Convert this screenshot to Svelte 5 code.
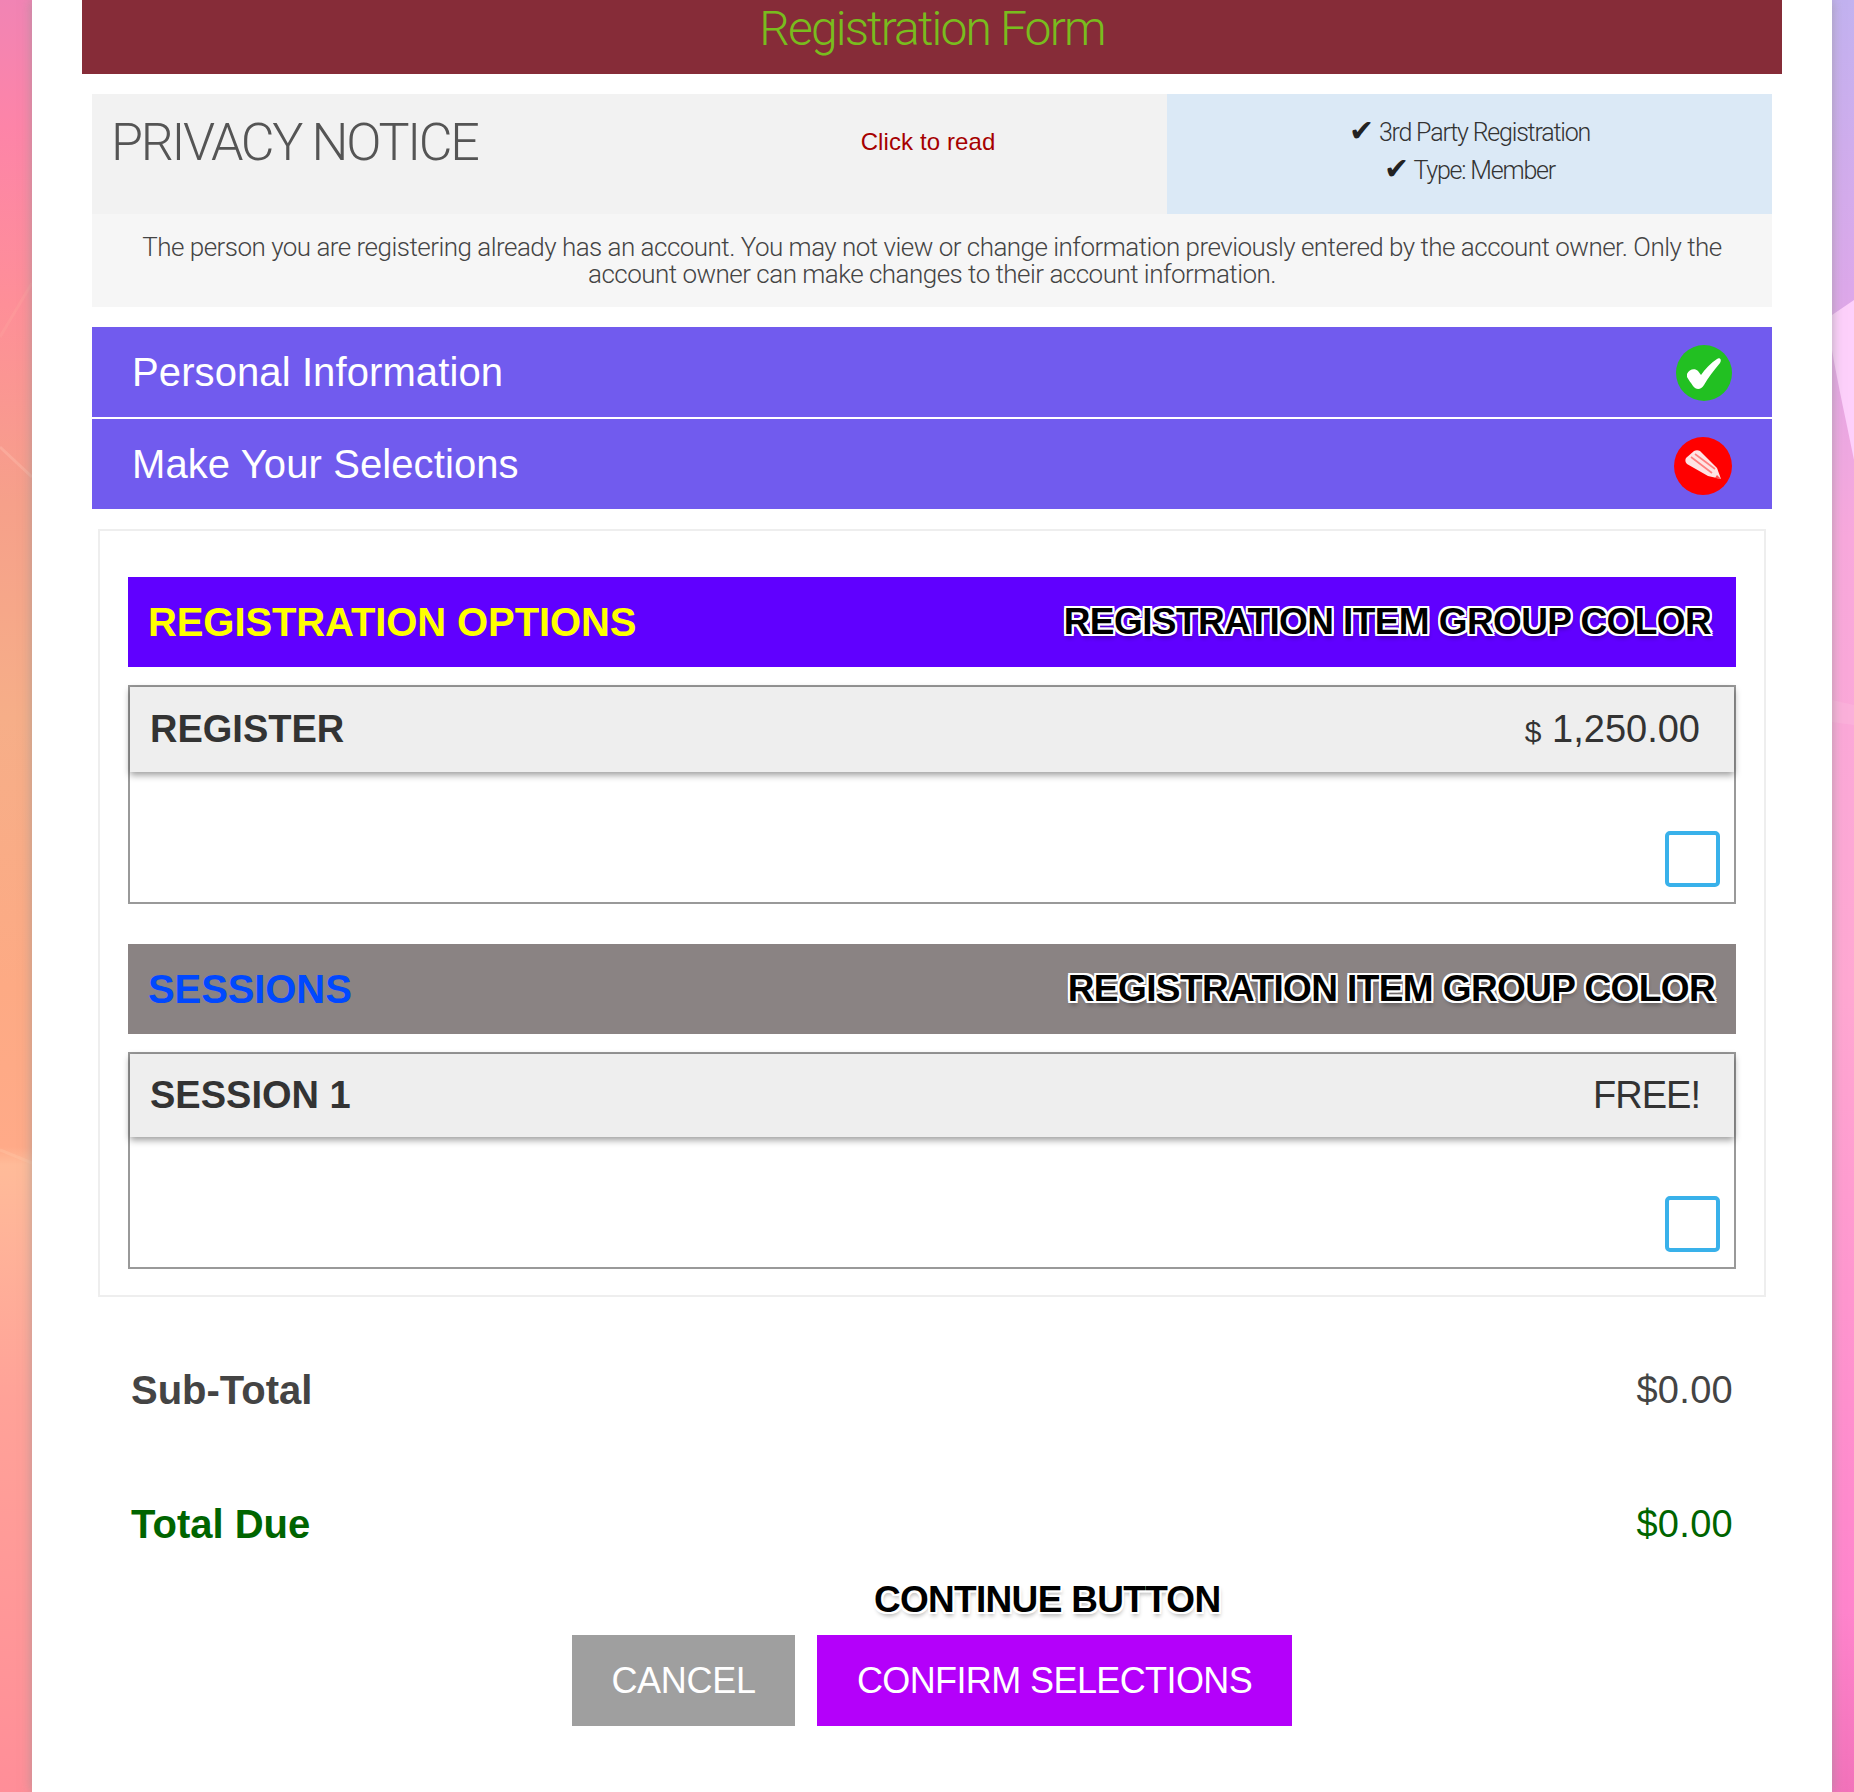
<script>
  const groups = [
    { title: 'REGISTRATION OPTIONS', cls: 'g1', item: 'REGISTER', free: false },
    { title: 'SESSIONS', cls: 'g2', item: 'SESSION 1', free: true }
  ];
</script>

<div class="page">
  <svg class="bg" width="1854" height="1792" viewBox="0 0 1854 1792" aria-hidden="true">
    <defs>
      <linearGradient id="lg" x1="0" y1="0" x2="0" y2="1">
        <stop offset="0" stop-color="#f184b4"/>
        <stop offset="0.07" stop-color="#fd84a8"/>
        <stop offset="0.17" stop-color="#fe8f98"/>
        <stop offset="0.28" stop-color="#f6a08a"/>
        <stop offset="0.4" stop-color="#f6ae88"/>
        <stop offset="0.55" stop-color="#fdaa84"/>
        <stop offset="0.64" stop-color="#ffaa88"/>
        <stop offset="0.65" stop-color="#ffbb99"/>
        <stop offset="0.78" stop-color="#ffa298"/>
        <stop offset="1" stop-color="#ff8e98"/>
      </linearGradient>
      <linearGradient id="rg" x1="0" y1="0" x2="0" y2="1">
        <stop offset="0" stop-color="#c2b2f0"/>
        <stop offset="0.16" stop-color="#dca8ea"/>
        <stop offset="0.3" stop-color="#f8a8dc"/>
        <stop offset="0.55" stop-color="#ffa8d2"/>
        <stop offset="0.9" stop-color="#ff84cc"/>
        <stop offset="1" stop-color="#f272ba"/>
      </linearGradient>
    </defs>
    <rect x="0" y="0" width="40" height="1792" fill="url(#lg)"/>
    <rect x="1820" y="0" width="34" height="1792" fill="url(#rg)"/>
    <path d="M0 337 L32 283" stroke="#ffb8a8" stroke-width="3" opacity="0.18" fill="none"/>
    <path d="M0 447 L32 477" stroke="#ffcab8" stroke-width="3" opacity="0.3" fill="none"/>
    <path d="M0 1150 L32 1163" stroke="#ffc8a8" stroke-width="3" opacity="0.35" fill="none"/>
    <path d="M1832 315 L1854 300 L1854 460 C1846 420 1838 385 1832 350 Z" fill="#fdd0fb"/>
    <path d="M1832 700 L1854 705 L1854 725 L1832 722 Z" fill="#ffd0e8" opacity="0.2"/>
  </svg>

  <main class="panel">
    <header class="top">Registration Form</header>

    <div class="content">
      <section class="privacy">
        <div class="notice-head">
          <h2>PRIVACY NOTICE</h2>
          <a class="read" href="#read">Click to read</a>
        </div>
        <div class="status">
          <div><span class="tick">✔</span> 3rd Party Registration</div>
          <div><span class="tick">✔</span> Type: Member</div>
        </div>
      </section>
      <p class="note">The person you are registering already has an account. You may not view or change information previously entered by the account owner. Only the account owner can make changes to their account information.</p>

      <div class="step first">
        <span>Personal Information</span>
        <svg class="badge ok" width="58" height="58" viewBox="0 0 58 58" aria-hidden="true">
          <circle cx="29" cy="29" r="28" fill="#22c022"/>
          <path d="M12 30 C14 25 20 24 23 27 L26 31 C30 25 36 19 42 15 C45 13 47 16 45 19 C39 26 33 34 29 41 C26 46 21 46 18 42 C16 39 13 35 12 33 Z" fill="#fff"/>
        </svg>
      </div>
      <div class="step">
        <span>Make Your Selections</span>
        <svg class="badge edit" width="58" height="58" viewBox="0 0 58 58" aria-hidden="true">
          <circle cx="29" cy="29" r="29" fill="#ff0000"/>
          <path d="M12 21 L20 14 C22 13 24 13 26 14 L43 31 L47 42 L34 39 L13 27 C11 25 11 23 12 21 Z" fill="#ffe4e4"/>
          <path d="M17 20 L38 36 M21 17 L41 32" stroke="#ff7f7f" stroke-width="1.6" fill="none"/>
          <path d="M43 38 L47 42 L41 41 Z" fill="#ff5050"/>
        </svg>
      </div>

      <section class="box">
        {#each groups as g}
          <div class="group {g.cls}">
            <h3>{g.title}</h3>
            <span class="outlined">REGISTRATION ITEM GROUP COLOR</span>
          </div>
          <div class="item {g.cls}">
            <div class="item-head">
              <strong>{g.item}</strong>
              {#if g.free}
                <span class="price free">FREE!</span>
              {:else}
                <span class="price"><small>$</small> 1,250.00</span>
              {/if}
            </div>
            <div class="item-body"><span class="check"></span></div>
          </div>
        {/each}
      </section>

      <div class="sum sub"><b>Sub-Total</b><span>$0.00</span></div>
      <div class="sum due"><b>Total Due</b><span>$0.00</span></div>

      <div class="actions">
        <div class="outlined cont">CONTINUE BUTTON</div>
        <div class="btns">
          <button class="cancel">CANCEL</button>
          <button class="confirm">CONFIRM SELECTIONS</button>
        </div>
      </div>
    </div>
  </main>
</div>

<style>
  :global(body) { margin: 0; }
  .page {
    position: relative;
    width: 1854px;
    height: 1792px;
    overflow: hidden;
    font-family: "Liberation Sans", Arial, sans-serif;
    background: #fff;
  }
  .bg { position: absolute; left: 0; top: 0; }
  .panel {
    position: relative;
    width: 1800px;
    height: 1792px;
    margin-left: 32px;
    background: #fff;
    box-shadow: 0 0 11px rgba(150, 150, 150, 0.7);
  }
  .top {
    margin: 0 50px;
    height: 74px;
    background: #862c38;
    color: #79bc1e;
    font-family: Roboto, "Liberation Sans", sans-serif;
    font-weight: 300;
    font-size: 48px;
    line-height: 58px;
    text-align: center;
    letter-spacing: -1.85px;
  }
  .content { margin: 0 60px; padding-top: 20px; }
  .privacy { display: flex; height: 120px; background: #f2f2f2; }
  .notice-head { flex: 0 0 1075px; display: flex; align-items: flex-start; }
  .notice-head h2 {
    flex: 0 0 672px;
    box-sizing: border-box;
    margin: 0;
    padding: 19px 0 0 19px;
    font-family: Roboto, "Liberation Sans", sans-serif;
    font-weight: 300;
    font-size: 52px;
    line-height: 60px;
    letter-spacing: -2.3px;
    color: #555;
  }
  .read {
    flex: 0 0 328px;
    margin-top: 33px;
    text-align: center;
    font-size: 24px;
    line-height: 30px;
    letter-spacing: 0.1px;
    color: #a60000;
    text-decoration: none;
  }
  .status {
    flex: 1;
    background: #dbe9f6;
    padding-top: 20px;
    text-align: center;
    font-family: Roboto, "Liberation Sans", sans-serif;
    font-weight: 300;
    font-size: 25px;
    line-height: 38px;
    letter-spacing: -1.2px;
    color: #333;
  }
  .tick { font-family: "DejaVu Sans", sans-serif; font-size: 30px; line-height: 30px; letter-spacing: 0; color: #222; }
  .note {
    margin: 0;
    box-sizing: border-box;
    height: 93px;
    padding: 20px 40px 0;
    background: #f6f6f6;
    text-align: center;
    font-family: Roboto, "Liberation Sans", sans-serif;
    font-weight: 300;
    font-size: 26px;
    line-height: 27px;
    letter-spacing: -0.52px;
    color: #444;
  }
  .step {
    display: flex;
    align-items: center;
    justify-content: space-between;
    height: 90px;
    margin-top: 2px;
    padding: 0 39px 0 40px;
    background: #715bee;
    color: #fff;
    font-size: 40px;
    letter-spacing: 0.1px;
  }
  .step.first { margin-top: 20px; }
  .badge.ok { margin-top: 2px; }
  .badge.edit { margin: 4px 1px 0 0; }
  .box {
    box-sizing: border-box;
    width: 1668px;
    height: 768px;
    margin: 20px 0 0 6px;
    padding: 46px 28px 0;
    border: 2px solid #eee;
  }
  .group {
    display: flex;
    align-items: center;
    justify-content: space-between;
    height: 90px;
    padding: 0 25px 0 20px;
  }
  .group h3 { margin: 0; font-size: 40px; letter-spacing: -0.1px; }
  .group.g1 { background: #6000ff; }
  .group.g1 h3 { color: #ffff00; }
  .group.g2 { background: #8a8383; margin-top: 40px; }
  .group.g2 h3 { color: #0048ff; }
  .group.g2 .outlined { position: relative; left: 4px; }
  .outlined {
    color: #000;
    font-weight: 700;
    font-size: 37px;
    letter-spacing: -0.6px;
    text-shadow:
      -2px 0 0 #fff, 2px 0 0 #fff, 0 -2px 0 #fff, 0 2px 0 #fff,
      -2px -2px 0 #fff, 2px -2px 0 #fff, -2px 2px 0 #fff, 2px 2px 0 #fff,
      1px 4px 4px rgba(0, 0, 0, 0.3);
  }
  .item {
    position: relative;
    margin-top: 18px;
    border: 2px solid #999;
    background: #fff;
  }
  .item-head {
    display: flex;
    align-items: center;
    justify-content: space-between;
    height: 85px;
    padding: 0 34px 0 20px;
    background: #eee;
    box-shadow: 0 3px 7px rgba(0, 0, 0, 0.4);
    color: #333;
    font-size: 38px;
  }
  .item.g2 .item-head { height: 83px; }
  .price small { font-size: 30px; }
  .price.free { letter-spacing: -1px; }
  .item-body {
    display: flex;
    justify-content: flex-end;
    align-items: flex-end;
    height: 130px;
    padding: 0 14px 15px 0;
    box-sizing: border-box;
  }
  .check {
    box-sizing: border-box;
    width: 55px;
    height: 56px;
    border: 4px solid #39b1ea;
    border-radius: 5px;
  }
  .sum {
    display: flex;
    justify-content: space-between;
    padding: 0 39px 0 39px;
    font-size: 38px;
    line-height: 46px;
  }
  .sum b { font-size: 40px; }
  .sum span { letter-spacing: 0.3px; }
  .sub { margin-top: 70px; color: #444; }
  .due { margin-top: 88px; color: #006400; }
  .actions { margin-top: 28px; }
  .cont {
    width: 345px;
    margin-left: 782px;
    white-space: nowrap;
    line-height: 50px;
    letter-spacing: -0.7px;
  }
  .btns { display: flex; gap: 22px; margin: 10px 0 0 480px; }
  button {
    height: 91px;
    border: 0;
    border-radius: 0;
    padding: 0;
    color: #fff;
    font-family: "Liberation Sans", Arial, sans-serif;
    font-size: 36px;
  }
  .cancel { width: 223px; background: #9f9f9f; letter-spacing: -0.3px; }
  .confirm { width: 475px; background: #b400fa; letter-spacing: -0.6px; }
</style>
